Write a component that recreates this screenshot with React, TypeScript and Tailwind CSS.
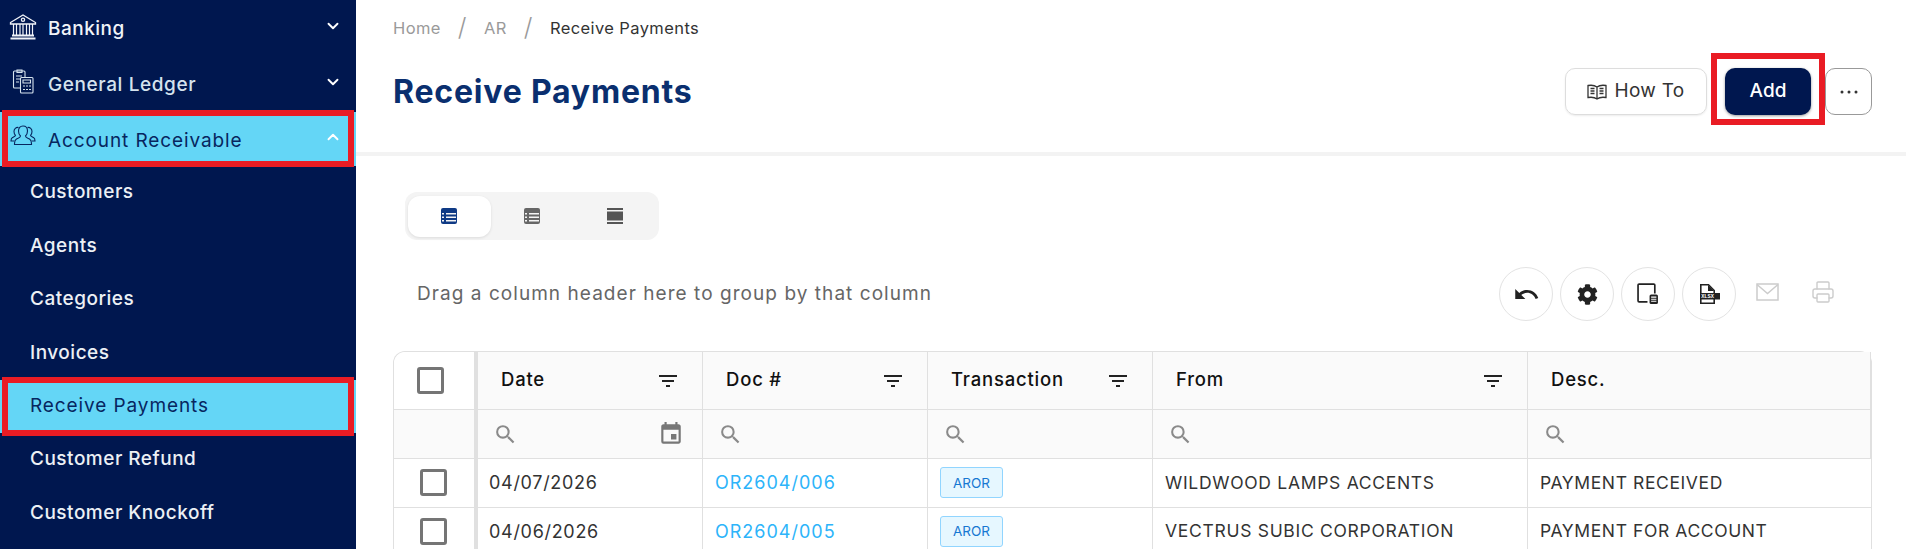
import { ChevronDown, ChevronUp, Printer } from "lucide-react";
import { FaCog } from "react-icons/fa";
import { MdEvent, MdFilterList, MdSearch, MdUndo } from "react-icons/md";

const font = "font-['Inter','Liberation_Sans',sans-serif]";

const subItems = ["Customers", "Agents", "Categories", "Invoices", "Receive Payments", "Customer Refund", "Customer Knockoff"];

const columns = [
  { label: "Date", date: true },
  { label: "Doc #" },
  { label: "Transaction" },
  { label: "From" },
  { label: "Desc.", noFilter: true },
];

const rows = [
  { date: "04/07/2026", doc: "OR2604/006", from: "WILDWOOD LAMPS ACCENTS", desc: "PAYMENT RECEIVED" },
  { date: "04/06/2026", doc: "OR2604/005", from: "VECTRUS SUBIC CORPORATION", desc: "PAYMENT FOR ACCOUNT" },
];

const BankIcon = () => (
  <svg width="28" height="28" viewBox="0 0 28 28" fill="none" stroke="currentColor" strokeWidth="1.3">
    <path d="M1.5 9.5 14 2l12.5 7.5v1.5h-25z" />
    <circle cx="14" cy="6.8" r="1.6" />
    <path d="M4.5 11v11M7.5 11v11M11 11v11M14 11v11M17.5 11v11M20.5 11v11M23.5 11v11" strokeWidth="1.2" />
    <path d="M3 22.5h22M1.5 25.5h25" strokeWidth="2" />
  </svg>
);

const LedgerIcon = () => (
  <svg width="22" height="26" viewBox="0 0 22 26" fill="none" stroke="currentColor" strokeWidth="1.1">
    <path d="M8 20H2.5a1 1 0 0 1-1-1V4a1 1 0 0 1 1-1H12a1 1 0 0 1 1 1v5" />
    <path d="M5 2h5v2.500H5zM4 8h6M4 11h4M4 14h3" />
    <rect x="8.500" y="9.500" width="12.500" height="15.500" rx="1" />
    <path d="M11 12h7.500v3H11zM11 18h2M14 18h2M17 18h2M11 21.500h2M14 21.500h2M17 21.500h2" />
  </svg>
);

const UsersIcon = () => (
  <svg width="26" height="24" viewBox="0 0 26 24" fill="none" stroke="currentColor" strokeWidth="1.1">
    <path d="M13 2c3 0 4.500 2.200 4.500 5 0 2.200-1 4-2 5 0 1.500 2 2 4 3 1.500.8 2 2 2 4.500v1H4.500v-1c0-2.500.5-3.700 2-4.500 2-1 4-1.500 4-3-1-1-2-2.800-2-5 0-2.800 1.500-5 4.500-5z" />
    <path d="M8.500 3.500C6 3 4 5 4 7.500c0 1.500.6 3 1.500 3.800 0 1-1.500 1.500-3 2.200C1.300 14.200 1 15.500 1 17h3M17.500 3.500C20 3 22 5 22 7.500c0 1.500-.6 3-1.500 3.800 0 1 1.500 1.500 3 2.200 1.200.7 1.500 2 1.500 3.500h-3" />
  </svg>
);

const ListTableIcon = ({ className }: { className: string }) => (
  <svg width="16" height="16" viewBox="0 0 16 16" className={className}>
    <rect width="16" height="16" rx="2" fill="currentColor" />
    <path d="M1 5h2v1.500H1zM5 5h10v1.500H5zM1 8.500h2V10H1zM5 8.500h10V10H5zM1 12h2v1.500H1zM5 12h10v1.500H5z" fill="#f4f4f4" />
  </svg>
);

const RowsIcon = () => (
  <svg width="16" height="16" viewBox="0 0 16 16" fill="#555555">
    <rect y="0" width="16" height="2" />
    <rect y="3.500" width="16" height="9" />
    <rect y="14" width="16" height="2" />
  </svg>
);

const ColumnsDocIcon = () => (
  <svg width="22" height="22" viewBox="0 0 21 21" fill="none" stroke="#222222" strokeWidth="1.600">
    <path d="M10 18H2a1 1 0 0 1-1-1V2a1 1 0 0 1 1-1h14a1 1 0 0 1 1 1v8" />
    <rect x="12" y="11" width="8" height="9" rx="1.500" fill="#222222" stroke="none" />
    <path d="M13.500 13.500h5M13.500 15.500h5M13.500 17.500h5" stroke="#ffffff" strokeWidth="1" />
  </svg>
);

const XlsxIcon = () => (
  <svg width="22" height="22" viewBox="0 0 22 22" fill="none">
    <path d="M2.800 1.800h7.700l5.700 5.700v12.700h-13.400z" stroke="#222222" strokeWidth="1.600" />
    <path d="M10 2v6h6z" fill="#222222" />
    <rect x="2" y="10" width="20" height="6.500" fill="#222222" />
    <text x="3.200" y="15.300" fill="#ffffff" fontSize="5.300" fontWeight="700" fontFamily="Liberation Mono">XLSX</text>
  </svg>
);

const MailIcon = () => (
  <svg width="23" height="18" viewBox="0 0 23 18" fill="none" stroke="#cccccc" strokeWidth="1.500">
    <rect x="1" y="1" width="21" height="16" />
    <path d="m1 1.500 10.500 9 10.500-9" />
  </svg>
);

const RedBox = ({ className }: { className: string }) => (
  <span className={`pointer-events-none absolute border-[6px] border-[#e91c24] ${className}`} />
);

const Sidebar = () => (
  <aside className="relative z-10 w-[356px] shrink-0 bg-[#00174f] text-[19px] tracking-[0.5px]">
    <div className="flex h-14 items-center pl-[9px] pr-[14px] text-[#f0f3f8]">
      <span className="flex w-[39px] -translate-y-[1px]"><BankIcon /></span>
      <span className="flex-1 translate-y-[1px] font-medium">Banking</span>
      <ChevronDown size={18} strokeWidth={2.500} className="-translate-y-[2px] text-white" />
    </div>
    <div className="flex h-14 items-center pl-[12px] pr-[14px] text-[#d5e3ee]">
      <span className="flex w-[36px] -translate-y-[3px]"><LedgerIcon /></span>
      <span className="flex-1 translate-y-[1px] font-medium tracking-[0.6px]">General Ledger</span>
      <ChevronDown size={18} strokeWidth={2.500} className="-translate-y-[2px] text-white" />
    </div>
    <div className="relative flex h-[54px] items-center bg-[#64d6f6] pl-[10px] pr-[14px] text-[#07265f]">
      <RedBox className="inset-x-[2px] -top-[2px] -bottom-[1px]" />
      <span className="flex w-[38px] -translate-y-[3px]"><UsersIcon /></span>
      <span className="flex-1 translate-y-[2px] tracking-[0.9px]">Account Receivable</span>
      <ChevronUp size={18} strokeWidth={2.500} className="-translate-y-[2px] text-white" />
    </div>
    {subItems.map((item) =>
      item === "Receive Payments" ? (
        <div key={item} className="relative flex h-[53.400px] items-center bg-[#64d6f6] pl-[30px] tracking-[0.9px] text-[#07265f]">
          <RedBox className="inset-x-[2px] -inset-y-[3px]" />
          {item}
        </div>
      ) : (
        <div key={item} className="flex h-[53.400px] items-center pl-[30px] font-medium text-[#ecf0f5]">
          {item}
        </div>
      )
    )}
  </aside>
);

const PageHeader = () => (
  <header className="h-[156px] shrink-0 border-b-[4px] border-[#f3f3f3] pl-[37px] pr-[34px]">
    <div className="flex h-[56px] items-center text-[16.500px] tracking-[0.4px] text-[#9a9a9a]">
      <span>Home</span>
      <span className="px-[17px] text-[25px] font-light">/</span>
      <span>AR</span>
      <span className="px-[17px] text-[25px] font-light">/</span>
      <span className="text-[#333333]">Receive Payments</span>
    </div>
    <div className="flex h-[71px] items-center justify-between">
      <h1 className="text-[32px] font-bold tracking-[0.8px] text-[#0a2f6f]">Receive Payments</h1>
      <div className="flex h-[47px] items-center">
        <button className="flex h-[47px] w-[142px] items-center justify-center gap-[7px] rounded-[10px] border border-[#dddddd] text-[19px] tracking-[0.3px] text-[#333333] shadow-[0_1px_2px_rgba(0,0,0,0.08)]">
          <svg width="20" height="16" viewBox="0 0 20 16" fill="none" stroke="#333333" strokeWidth="1.300">
            <path d="M10 3C8 1.500 4 1 1 1.500v12c3-.5 7 0 9 1.500 2-1.500 6-2 9-1.500v-12C16 1 12 1.500 10 3zM10 3v12" />
            <path d="M3.500 4.500h4M3.500 7h4M3.500 9.500h4M12.500 4.500h4M12.500 7h4M12.500 9.500h4" />
          </svg>
          How To
        </button>
        <div className="relative ml-[18px] mr-[14px]">
          <RedBox className="-inset-x-[14px] -top-[15px] -bottom-[10px]" />
          <button className="h-[47px] w-[86px] rounded-[10px] bg-[#00174f] text-[19px] font-medium text-white shadow-[0_1px_3px_rgba(0,0,0,0.4)]">
            Add
          </button>
        </div>
        <button className="flex h-[47px] w-[47px] items-center justify-center rounded-[10px] border border-[#999999]">
          <svg width="18" height="4" viewBox="0 0 18 4" fill="#333333">
            <circle cx="2" cy="2" r="1.500" />
            <circle cx="9" cy="2" r="1.500" />
            <circle cx="16" cy="2" r="1.500" />
          </svg>
        </button>
      </div>
    </div>
  </header>
);

const ViewTabs = () => (
  <div className="flex h-[48px] w-[254px] items-center rounded-[12px] bg-[#f4f4f4] px-[3px]">
    <div className="flex h-[41px] w-[83px] items-center justify-center rounded-[12px] bg-white shadow-[0_1px_3px_rgba(0,0,0,0.1)]">
      <ListTableIcon className="text-[#0f3a85]" />
    </div>
    <div className="flex h-[41px] w-[83px] items-center justify-center">
      <ListTableIcon className="text-[#666666]" />
    </div>
    <div className="flex h-[41px] w-[83px] items-center justify-center">
      <RowsIcon />
    </div>
  </div>
);

const CircleButton = ({ children }: { children: React.ReactNode }) => (
  <button className="flex h-[54px] w-[54px] items-center justify-center rounded-full border border-[#e3e3e3]">
    {children}
  </button>
);

const GroupBar = () => (
  <div className="mt-[27px] flex h-[54px] items-center justify-between">
    <span className="pl-[24px] text-[19px] tracking-[1.050px] text-[#666666]">Drag a column header here to group by that column</span>
    <div className="flex items-center gap-[7px] pr-[31px]">
      <CircleButton><MdUndo size={27} color="#222222" /></CircleButton>
      <CircleButton><FaCog size={21} color="#222222" /></CircleButton>
      <CircleButton><ColumnsDocIcon /></CircleButton>
      <CircleButton><XlsxIcon /></CircleButton>
      <span className="ml-[6px] flex w-[36px] -translate-y-[2px] justify-center"><MailIcon /></span>
      <span className="ml-[13px] flex w-[36px] -translate-y-[2px] justify-center"><Printer size={24} strokeWidth={1.400} color="#cccccc" /></span>
    </div>
  </div>
);

const Checkbox = () => <span className="block h-[27px] w-[27px] rounded-[3px] border-[3px] border-[#757575] bg-white" />;

const DataTable = () => (
  <div className="mt-[30px] grid grid-cols-[84px_225px_225px_225px_375px_1fr] rounded-t-[12px] border-x border-t border-[#e0e0e0]">
    <div className="flex h-[58px] items-center justify-center rounded-tl-[12px] border-r-[4px] border-b border-[#e0e0e0] bg-white pr-[8px]">
      <Checkbox />
    </div>
    {columns.map((col) => (
      <div key={col.label} className="flex h-[58px] items-center justify-between border-r border-b border-[#e0e0e0] bg-[#fafafa] pl-[23px] pr-[22px] text-[18.500px] font-medium tracking-[0.8px] text-[#111111] last:rounded-tr-[12px] last:border-r-0">
        <span className="-translate-y-[1px]">{col.label}</span>
        {!col.noFilter && <MdFilterList size={24} color="#222222" />}
      </div>
    ))}
    <div className="h-[49px] border-r-[4px] border-b border-[#e0e0e0] bg-[#fafafa]" />
    {columns.map((col) => (
      <div key={col.label} className="flex h-[49px] items-center justify-between border-r border-b border-[#e0e0e0] bg-[#fafafa] pl-[15px] pr-[18px] last:border-r-0">
        <MdSearch size={25} color="#8a8a8a" />
        {col.date && <MdEvent size={26} color="#777777" />}
      </div>
    ))}
    {rows.map((row) => (
      <div key={row.doc} className="contents text-[#333333]">
        <div className="flex h-[48.500px] items-center justify-center border-r-[4px] border-b border-[#e0e0e0] pr-[2px]">
          <Checkbox />
        </div>
        <div className="flex items-center border-r border-b border-[#e0e0e0] pl-[11px] text-[18px] tracking-[0.7px]">{row.date}</div>
        <div className="flex items-center border-r border-b border-[#e0e0e0] pl-[12px] text-[18px] tracking-[1px] text-[#2db4fa]">{row.doc}</div>
        <div className="flex items-center border-r border-b border-[#e0e0e0] pl-[12px]">
          <span className="flex h-[31px] w-[63px] items-center justify-center rounded-[3px] border border-[#91d5ff] bg-[#e6f7ff] text-[13.500px] text-[#1677d2]">AROR</span>
        </div>
        <div className="flex items-center border-r border-b border-[#e0e0e0] pl-[12px] text-[17.500px] tracking-[0.7px]">{row.from}</div>
        <div className="flex items-center border-b border-[#e0e0e0] pl-[12px] text-[17.500px] tracking-[0.6px]">{row.desc}</div>
      </div>
    ))}
  </div>
);

export default function App() {
  return (
    <div className={`flex h-[549px] overflow-hidden bg-white ${font}`}>
      <Sidebar />
      <main className="flex min-w-0 flex-1 flex-col">
        <PageHeader />
        <div className="pl-[37px] pr-[34px]">
          <div className="mt-[36px] pl-[12px]">
            <ViewTabs />
          </div>
          <GroupBar />
          <DataTable />
        </div>
      </main>
    </div>
  );
}
